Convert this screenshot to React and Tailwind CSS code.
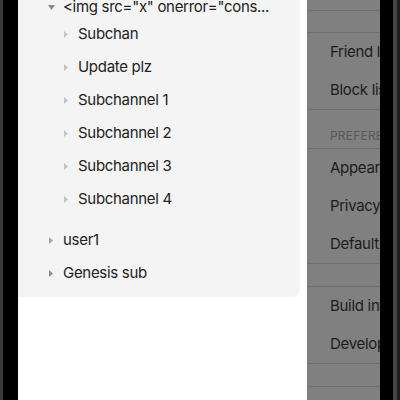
const font = { fontFamily: 'Inter, "Liberation Sans", sans-serif' }

const Caret = ({ dir = 'right', color = '#c4c4c4' }) =>
  dir === 'down' ? (
    <svg width="7" height="5" viewBox="0 0 7 5">
      <path d="M0 0L7 0L3.5 5z" fill={color} />
    </svg>
  ) : (
    <svg width="4" height="7" viewBox="0 0 4 7">
      <path d="M0 0L4 3.5L0 7z" fill={color} />
    </svg>
  )

const children = ['Subchan', 'Update plz', 'Subchannel 1', 'Subchannel 2', 'Subchannel 3', 'Subchannel 4']

const Line = () => <div className="h-px shrink-0 bg-[#6e6e6e]" />

const SettingRow = ({ label }) => (
  <div className="flex h-[38px] shrink-0 items-center pl-[23px] whitespace-nowrap text-[15px] tracking-[-0.3px] text-[#1c1c1c]">
    {label}
  </div>
)

export default function App() {
  return (
    <div className="flex h-[400px] w-[400px] overflow-hidden bg-black" style={font}>
      <div className="w-[3px] shrink-0 bg-[#3a3a3a]" />
      <div className="w-[15px] shrink-0 bg-black" />

      <div className="flex w-[289px] shrink-0 flex-col bg-white">
        <div className="mt-[-4px] flex w-[282px] flex-col rounded-br-[8px] bg-[#f4f4f4] pb-2 text-[15px] tracking-[-0.3px] text-[#222]">
          <div className="flex h-[22px] items-center pl-[30px] whitespace-nowrap">
            <span className="flex w-[15px]">
              <Caret dir="down" color="#8a8a8a" />
            </span>
            &lt;img src="x" onerror="cons...
          </div>
          {children.map((c) => (
            <div key={c} className="flex h-[33px] items-center pl-[46px]">
              <span className="flex w-[14px]">
                <Caret />
              </span>
              {c}
            </div>
          ))}
          <div className="mt-2 flex h-[33px] items-center pl-[31px]">
            <span className="flex w-[14px]">
              <Caret color="#a8a8a8" />
            </span>
            user1
          </div>
          <div className="flex h-[32px] items-center pl-[31px]">
            <span className="flex w-[14px]">
              <Caret color="#8f8f8f" />
            </span>
            Genesis sub
          </div>
        </div>
      </div>

      <div className="flex w-[73px] shrink-0 flex-col overflow-hidden bg-[#808080]">
        <div className="h-[10px] shrink-0" />
        <Line />
        <div className="h-[21px] shrink-0" />
        <Line />
        <SettingRow label="Friend list" />
        <SettingRow label="Block list" />
        <Line />
        <div className="flex h-[38px] shrink-0 items-end pb-[3px] pl-[23px] whitespace-nowrap text-[12px] tracking-[0.2px] text-[#575757]">
          PREFERENCES
        </div>
        <Line />
        <SettingRow label="Appearance" />
        <SettingRow label="Privacy" />
        <SettingRow label="Default server" />
        <Line />
        <div className="h-[22px] shrink-0" />
        <Line />
        <SettingRow label="Build info" />
        <SettingRow label="Developer options" />
        <Line />
        <div className="h-[22px] shrink-0" />
        <Line />
      </div>

      <div className="w-[13px] shrink-0 bg-black" />
      <div className="w-[4px] shrink-0 bg-[#464646]" />
      <div className="w-[3px] shrink-0 bg-[#1e1e1e]" />
    </div>
  )
}
